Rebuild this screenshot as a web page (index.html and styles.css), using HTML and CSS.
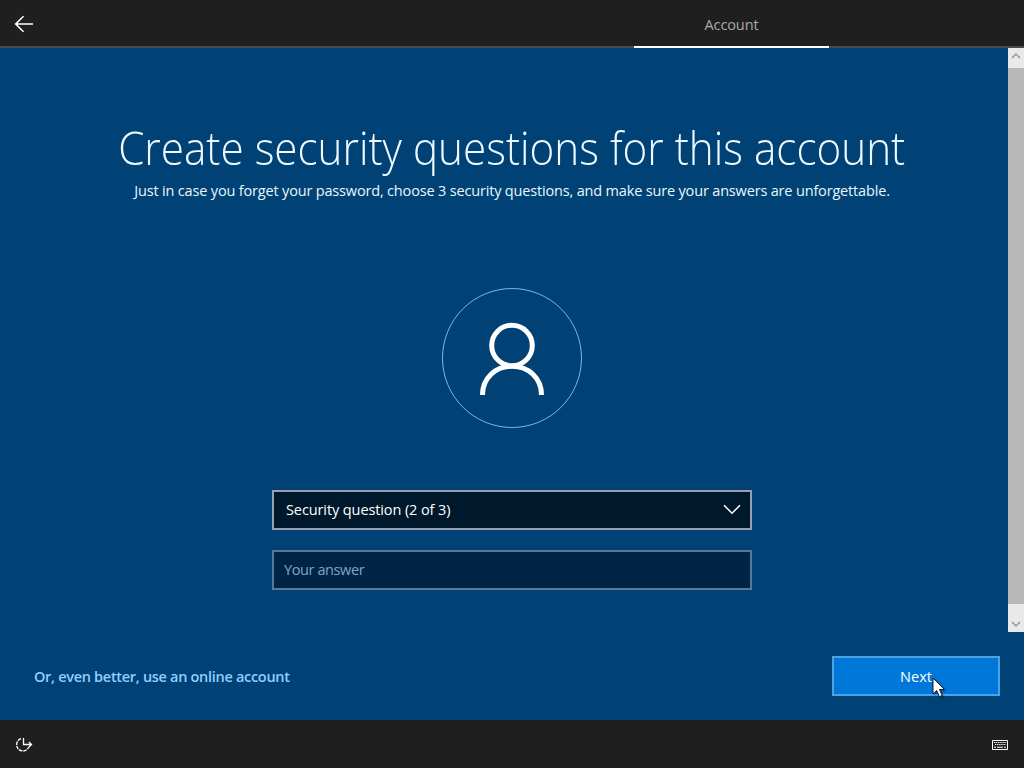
FILE: index.html
```html
<!DOCTYPE html>
<html lang="en">
<head>
  <meta charset="UTF-8">
  <meta name="viewport" content="width=device-width, initial-scale=1.0">
  <title>Create security questions for this account</title>
  <link rel="stylesheet" href="styles.css">
</head>
<body>
  <header class="topbar">
    <button class="icon-btn back" aria-label="Back">
      <svg width="20" height="18" viewBox="0 0 20 18">
        <path d="M19 9H2M9.500 1.200L1.700 9l7.800 7.800" fill="none" stroke="#fff" stroke-width="1.600"/>
      </svg>
    </button>
    <div class="tab">Account</div>
  </header>

  <div class="page">
    <main class="content">
      <h1>Create security questions for this account</h1>
      <p class="subtitle">Just in case you forget your password, choose 3 security questions, and make sure your answers are unforgettable.</p>

      <div class="avatar">
        <svg width="140" height="140" viewBox="0 0 140 140" fill="none">
          <circle cx="70" cy="70" r="69.5" stroke="#7fb6e6"/>
          <circle cx="70" cy="57.500" r="20.300" stroke="#fff" stroke-width="5"/>
          <path d="M40.500 107c0-17 13-28.700 29.500-28.700S99.500 90 99.500 107" stroke="#fff" stroke-width="5"/>
        </svg>
      </div>

      <div class="select">
        <span>Security question (2 of 3)</span>
        <svg width="18" height="11" viewBox="0 0 18 11">
          <path d="M1 1.200l8 8 8-8" fill="none" stroke="#fff" stroke-width="1.500"/>
        </svg>
      </div>
      <input class="answer" type="text" placeholder="Your answer">
    </main>

    <div class="scrollbar">
      <div class="scroll-up">
        <svg width="10" height="6" viewBox="0 0 10 6"><path d="M1 5l4-4 4 4" fill="none" stroke="#8a8a8a" stroke-width="1.200"/></svg>
      </div>
      <div class="thumb"></div>
      <div class="scroll-down">
        <svg width="10" height="6" viewBox="0 0 10 6"><path d="M1 1l4 4 4-4" fill="none" stroke="#8a8a8a" stroke-width="1.200"/></svg>
      </div>
    </div>
  </div>

  <div class="actions">
    <a class="online-link">Or, even better, use an online account</a>
    <button class="next">Next
      <svg class="cursor" width="14" height="21" viewBox="0 0 14 21">
        <path d="M1 1v16l3.700-3.500 2.700 6.200 2.800-1.200-2.700-6H12.500z" fill="#fff" stroke="#101c38"/>
      </svg>
    </button>
  </div>

  <footer class="bottombar">
    <svg width="18" height="16" viewBox="0 0 18 16" fill="none" stroke="#fff" stroke-width="1.300">
      <path d="M6 1.700A6.300 6.300 0 1 0 13.800 10" stroke-dasharray="3.600 .9"/>
      <path d="M8.500 1v6.500H16M14 5l2.500 2.500L14 10"/>
    </svg>
    <svg width="16" height="10" viewBox="0 0 16 10" fill="none" stroke="#fff">
      <path d="M.5.5h15v9H.5z"/>
      <path d="M2 2.500h12M3 4.500h11" stroke-dasharray="1.300 .8"/>
      <path d="M2 7.200h2M5 7.200h6M12 7.200h2"/>
    </svg>
  </footer>
</body>
</html>
```
FILE: styles.css
```css
:root {
  --bg: #004275;
  --bar: #1f1f1f;
  --link: #8fd0ff;
}

* {
  box-sizing: border-box;
}

body {
  margin: 0;
  height: 100vh;
  display: flex;
  flex-direction: column;
  overflow: hidden;
  background: var(--bg);
  color: #fff;
  font-family: "Open Sans", "Noto Sans", sans-serif;
  font-size: 14.5px;
}

svg {
  display: block;
}

.topbar {
  display: flex;
  align-items: stretch;
  height: 48px;
  background: linear-gradient(#4b4b4b, #4b4b4b) bottom / 100% 2px no-repeat, var(--bar);
}

.icon-btn {
  width: 48px;
  padding: 0 0 0 14px;
  background: none;
  border: none;
}

.tab {
  width: 195px;
  margin-left: 586px;
  border-bottom: 2px solid #fff;
  line-height: 49px;
  text-align: center;
  color: #a9a9a9;
  letter-spacing: -0.1px;
}

.page {
  display: flex;
  height: 584px;
}

.content {
  flex: 1;
  display: flex;
  flex-direction: column;
  align-items: center;
  padding: 68px 0 0 16px;
}

h1 {
  margin: 0;
  font-size: 46px;
  font-weight: 300;
  line-height: 62px;
  white-space: nowrap;
  color: #eefaff;
  /* slightly narrower letters */
  transform: scaleX(0.918);
}

.subtitle {
  margin: 2px 0 0;
  line-height: 22px;
  letter-spacing: -0.17px;
  white-space: nowrap;
  color: #e8f8ff;
}

.avatar {
  margin: 86px 0 62px;
}

.select,
.answer {
  width: 480px;
  height: 40px;
  flex: none;
  border: 2px solid #989fae;
}

.select {
  display: flex;
  align-items: center;
  justify-content: space-between;
  padding: 0 9px 2px 12px;
  background: #00182c;
  letter-spacing: -0.1px;
}

.answer {
  margin-top: 20px;
  padding: 0 10px 2px;
  border-color: #54799b;
  background: #002544;
  font: inherit;
  letter-spacing: -0.4px;
}

.answer::placeholder {
  color: #7fa5c6;
}

.scrollbar {
  width: 16px;
  display: flex;
  flex-direction: column;
  background: #e9e9e9;
}

.scroll-up,
.scroll-down {
  display: flex;
  justify-content: center;
  height: 20px;
  padding-top: 5px;
}

.scroll-down {
  height: 28px;
  padding-top: 17px;
}

.thumb {
  flex: 1;
  background: #b8b8b8;
}

.actions {
  display: flex;
  align-items: center;
  justify-content: space-between;
  height: 88px;
  padding: 0 24px 0 34px;
}

.online-link {
  color: var(--link);
  font-weight: 600;
  letter-spacing: -0.3px;
}

.next {
  position: relative;
  width: 168px;
  height: 40px;
  padding: 0;
  border: 2px solid #4da1e5;
  background: #0078d9;
  color: #fff;
  font: inherit;
}

/* mouse pointer resting on the button */
.cursor {
  position: absolute;
  left: 98px;
  top: 19px;
  filter: drop-shadow(1px 1px 1px rgba(0, 0, 0, 0.4));
}

.bottombar {
  display: flex;
  align-items: center;
  justify-content: space-between;
  height: 48px;
  padding: 1px 16px 0 15px;
  background: var(--bar);
}
```
